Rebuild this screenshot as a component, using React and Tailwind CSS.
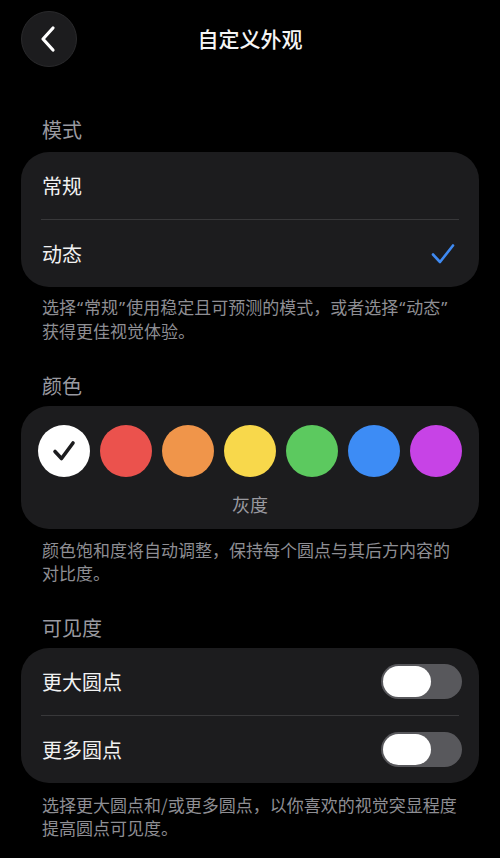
import React from "react";

const font = { fontFamily: '"Noto Sans CJK SC", "Noto Sans", sans-serif' };

function Toggle() {
  return (
    <div className="w-[81px] h-[35px] rounded-full bg-[#58585c] p-[2px] flex items-center">
      <div className="w-[48px] h-[31px] rounded-full bg-white" />
    </div>
  );
}

function Q({ children }) {
  return <span className="font-['Noto_Sans'] px-[1px]">{children}</span>;
}

const colors = ["#eb524d", "#f0954a", "#f8d84b", "#5cc95f", "#3d8cf5", "#c743e6"];

export default function App() {
  return (
    <div className="w-[500px] min-h-[858px] bg-black text-white" style={font}>
      <div className="pt-[11px] px-[21px] relative h-[67px]">
        <div className="w-14 h-14 rounded-full bg-[#1c1c1e] border border-[#2a2a2c] flex items-center justify-center">
          <svg width="24" height="28" viewBox="0 0 24 28" fill="none">
            <path d="M16 3 L6 14 L16 25" stroke="white" strokeWidth="3.2" strokeLinecap="round" strokeLinejoin="round" />
          </svg>
        </div>
        <div className="absolute left-0 right-0 top-[11px] h-14 flex items-center justify-center text-[21px] font-medium text-[#f5f5f5] pointer-events-none">
          自定义外观
        </div>
      </div>

      <div className="mt-[49px] px-[42px] text-[20px] leading-[28px] text-[#9a9aa0]">模式</div>
      <div className="mt-[8px] mx-[21px] rounded-[28px] bg-[#1c1c1e]">
        <div className="h-[67px] px-[21px] flex items-center text-[20px] text-[#f2f2f2]">常规</div>
        <div className="mx-[20px] h-px bg-[#38383a]" />
        <div className="h-[67px] px-[21px] flex items-center justify-between text-[20px] text-[#f2f2f2]">
          <span>动态</span>
          <svg width="24" height="22" viewBox="0 0 24 22" fill="none" className="mr-[3px]">
            <path d="M2 11.5 L9 19 L22 2.5" stroke="#3f8af2" strokeWidth="2.6" strokeLinecap="round" strokeLinejoin="round" />
          </svg>
        </div>
      </div>
      <div className="mt-[8px] px-[42px] text-[17px] leading-[23px] text-[#8e8e93] whitespace-nowrap">
        选择<Q>“</Q>常规<Q>”</Q>使用稳定且可预测的模式，或者选择<Q>“</Q>动态<Q>”</Q>
        <br />
        获得更佳视觉体验。
      </div>

      <div className="mt-[30px] px-[42px] text-[20px] leading-[28px] text-[#9a9aa0]">颜色</div>
      <div className="mt-[6px] mx-[21px] rounded-[28px] bg-[#1c1c1e] pt-[19px] pb-[12px]">
        <div className="flex gap-[10px] justify-center">
          <div className="w-[52px] h-[52px] rounded-full bg-white flex items-center justify-center">
            <svg width="26" height="24" viewBox="0 0 26 24" fill="none">
              <path d="M4 12.5 L10.5 19.5 L22 4" stroke="#1c1c1e" strokeWidth="3.6" strokeLinecap="round" strokeLinejoin="round" />
            </svg>
          </div>
          {colors.map((c) => (
            <div key={c} className="w-[52px] h-[52px] rounded-full" style={{ backgroundColor: c }} />
          ))}
        </div>
        <div className="mt-[14px] text-center text-[18px] leading-[26px] text-[#9a9aa0]">灰度</div>
      </div>
      <div className="mt-[9px] px-[42px] text-[17px] leading-[23px] text-[#8e8e93] whitespace-nowrap">
        颜色饱和度将自动调整，保持每个圆点与其后方内容的
        <br />
        对比度。
      </div>

      <div className="mt-[30px] px-[42px] text-[20px] leading-[28px] text-[#9a9aa0]">可见度</div>
      <div className="mt-[6px] mx-[21px] rounded-[28px] bg-[#1c1c1e]">
        <div className="h-[67px] pl-[21px] pr-[17px] flex items-center justify-between text-[20px] text-[#f2f2f2]">
          <span>更大圆点</span>
          <Toggle />
        </div>
        <div className="mx-[20px] h-px bg-[#38383a]" />
        <div className="h-[67px] pl-[21px] pr-[17px] flex items-center justify-between text-[20px] text-[#f2f2f2]">
          <span>更多圆点</span>
          <Toggle />
        </div>
      </div>
      <div className="mt-[10px] px-[42px] text-[17px] leading-[23px] text-[#8e8e93] whitespace-nowrap">
        选择更大圆点和/或更多圆点，以你喜欢的视觉突显程度
        <br />
        提高圆点可见度。
      </div>
    </div>
  );
}
